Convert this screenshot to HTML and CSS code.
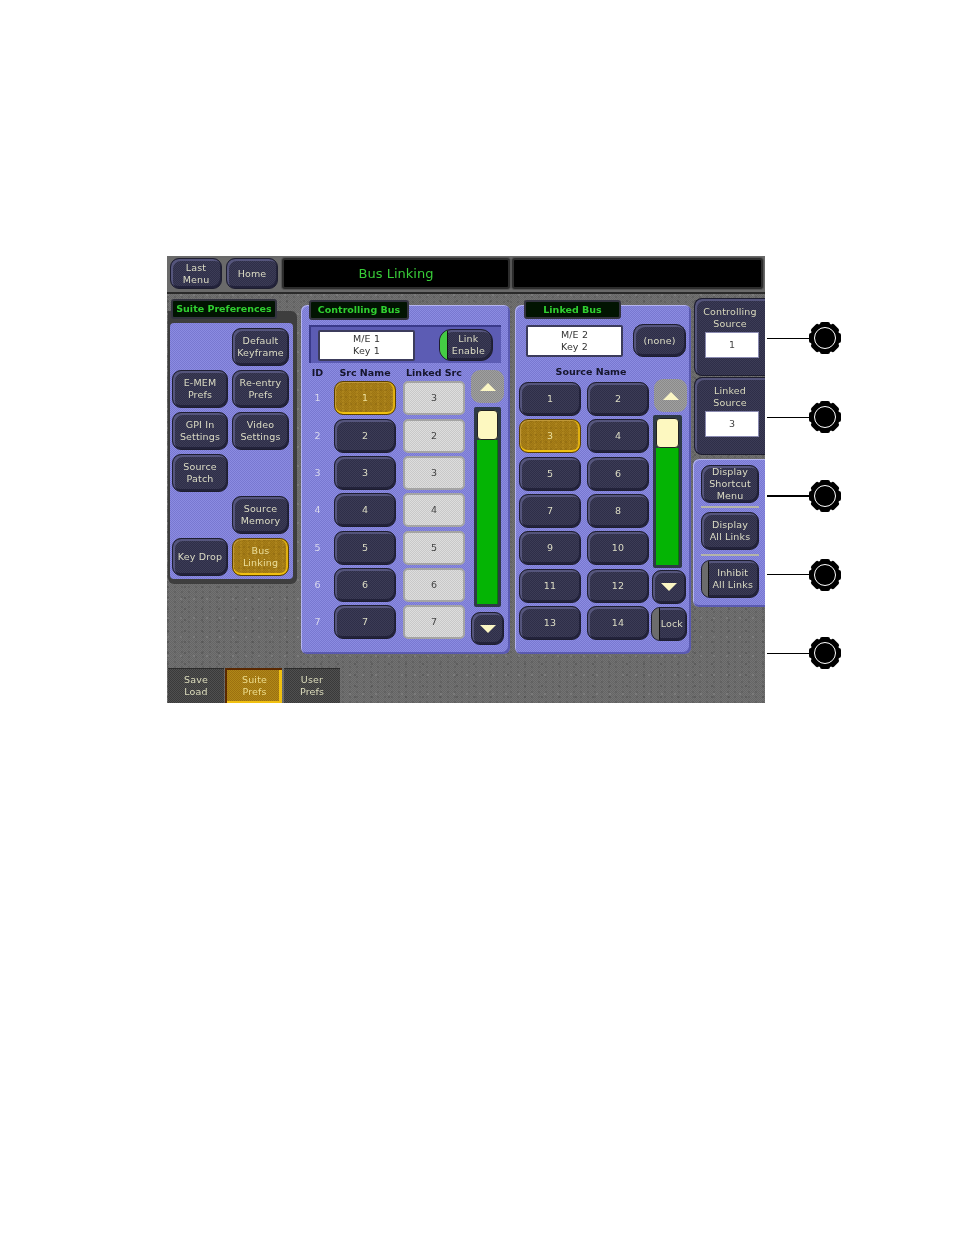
FILE: index.html
```html
<!DOCTYPE html>
<html lang="en">
<head>
<meta charset="utf-8">
<title>Bus Linking</title>
<link rel="stylesheet" href="styles.css">
</head>
<body>
<svg class="defs" width="0" height="0" aria-hidden="true">
  <symbol id="knob" viewBox="0 0 32 32">
    <g fill="#000">
      <circle cx="16" cy="16" r="14.8"/>
      <rect x="11" y="0" width="10" height="32" rx="2"/>
      <rect x="0" y="11" width="32" height="10" rx="2"/>
      <rect x="11" y="0" width="10" height="32" rx="2" transform="rotate(45 16 16)"/>
      <rect x="11" y="0" width="10" height="32" rx="2" transform="rotate(-45 16 16)"/>
    </g>
    <circle cx="16" cy="16" r="10.5" fill="#000" stroke="#fff" stroke-width="1"/>
  </symbol>
</svg>
<main class="sheet">
  <div class="console">
    <header class="topbar">
      <button class="btn top-btn">Last<br>Menu</button>
      <button class="btn top-btn">Home</button>
      <div class="title title-main">Bus Linking</div>
      <div class="title title-blank"></div>
    </header>
    <div class="workspace">
      <section class="prefs">
        <div class="tab tab-prefs">Suite Preferences</div>
        <div class="prefs-frame">
          <div class="prefs-grid">
            <span></span><button class="btn">Default<br>Keyframe</button>
            <button class="btn">E-MEM<br>Prefs</button><button class="btn">Re-entry<br>Prefs</button>
            <button class="btn">GPI In<br>Settings</button><button class="btn">Video<br>Settings</button>
            <button class="btn">Source<br>Patch</button><span></span>
            <span></span><button class="btn">Source<br>Memory</button>
            <button class="btn">Key Drop</button><button class="btn btn-on">Bus<br>Linking</button>
          </div>
        </div>
      </section>

      <section class="bus bus-ctrl">
        <div class="tab tab-ctrl">Controlling Bus</div>
        <div class="band">
          <div class="readout readout-ctrl">M/E 1<br>Key 1</div>
          <button class="btn btn-led"><i class="led"></i><span>Link<br>Enable</span></button>
        </div>
        <div class="bus-body">
          <div class="src-table">
            <div class="th">ID</div><div class="th">Src Name</div><div class="th th-linked">Linked Src</div>
            <div class="id">1</div><button class="btn btn-on">1</button><div class="linked">3</div>
            <div class="id">2</div><button class="btn">2</button><div class="linked">2</div>
            <div class="id">3</div><button class="btn">3</button><div class="linked">3</div>
            <div class="id">4</div><button class="btn">4</button><div class="linked">4</div>
            <div class="id">5</div><button class="btn">5</button><div class="linked">5</div>
            <div class="id">6</div><button class="btn">6</button><div class="linked">6</div>
            <div class="id">7</div><button class="btn">7</button><div class="linked">7</div>
          </div>
          <div class="scroller scroller-ctrl">
            <button class="arrow arrow-off"><i class="tri tri-up"></i></button>
            <div class="track track-ctrl"><div class="thumb"></div><div class="fill"></div></div>
            <button class="btn arrow"><i class="tri tri-down"></i></button>
          </div>
        </div>
      </section>

      <section class="bus bus-linked">
        <div class="tab tab-linked">Linked Bus</div>
        <div class="linked-head">
          <div class="readout readout-linked">M/E 2<br>Key 2</div>
          <button class="btn btn-none">(none)</button>
        </div>
        <div class="linked-body">
          <div class="names">
            <div class="th th-names">Source Name</div>
            <div class="name-grid">
              <button class="btn">1</button><button class="btn">2</button>
              <button class="btn btn-on">3</button><button class="btn">4</button>
              <button class="btn">5</button><button class="btn">6</button>
              <button class="btn">7</button><button class="btn">8</button>
              <button class="btn">9</button><button class="btn">10</button>
              <button class="btn">11</button><button class="btn">12</button>
              <button class="btn">13</button><button class="btn">14</button>
            </div>
          </div>
          <div class="scroller scroller-linked">
            <button class="arrow arrow-off"><i class="tri tri-up"></i></button>
            <div class="track track-linked"><div class="thumb"></div><div class="fill"></div></div>
            <button class="btn arrow arrow-down2"><i class="tri tri-down"></i></button>
            <button class="btn btn-lock"><i class="led led-off"></i><span>Lock</span></button>
          </div>
        </div>
      </section>

      <aside class="side">
        <div class="knob-panel">
          <div class="knob-label">Controlling<br>Source</div>
          <div class="knob-value">1</div>
        </div>
        <div class="knob-panel">
          <div class="knob-label">Linked<br>Source</div>
          <div class="knob-value">3</div>
        </div>
        <div class="side-menu">
          <button class="btn">Display<br>Shortcut<br>Menu</button>
          <hr class="rule">
          <button class="btn">Display<br>All Links</button>
          <hr class="rule">
          <button class="btn btn-led"><i class="led led-off"></i><span>Inhibit<br>All Links</span></button>
        </div>
      </aside>
    </div>
    <nav class="pages">
      <button class="page">Save<br>Load</button>
      <button class="page page-on">Suite<br>Prefs</button>
      <button class="page">User<br>Prefs</button>
    </nav>
  </div>
  <div class="knobs">
    <div class="knob-row"><i class="wire"></i><svg class="knob"><use href="#knob"/></svg></div>
    <div class="knob-row"><i class="wire"></i><svg class="knob"><use href="#knob"/></svg></div>
    <div class="knob-row"><i class="wire wire-bold"></i><svg class="knob"><use href="#knob"/></svg></div>
    <div class="knob-row"><i class="wire"></i><svg class="knob"><use href="#knob"/></svg></div>
    <div class="knob-row"><i class="wire"></i><svg class="knob"><use href="#knob"/></svg></div>
  </div>
</main>
</body>
</html>
```
FILE: styles.css
```css
* { box-sizing: border-box; }
html, body { margin: 0; background: #fff; }
body { width: 954px; height: 1235px; overflow: hidden; font-family: "DejaVu Sans", sans-serif; font-size: 9.5px; line-height: 12px; }
.defs { display: block; height: 0; }

.sheet { display: flex; padding: 256px 0 0 167px; }
.console {
  width: 598px; height: 447px; display: flex; flex-direction: column;
  filter: blur(0.25px);
  background-color: #6c6c6c;
  background-image:
    radial-gradient(circle at 1px 1px, #4c4c4c 0.6px, transparent 0.8px),
    radial-gradient(circle at 1px 1px, #8a8a8a 0.6px, transparent 0.8px),
    radial-gradient(circle at 1px 1px, #565656 0.6px, transparent 0.8px),
    repeating-conic-gradient(#656565 0 25%, #737373 0 50%);
  background-size: 17px 11px, 13px 19px, 7px 5px, 2px 2px;
}

/* dithered button */
.btn {
  display: flex; align-items: center; justify-content: center; text-align: center;
  margin: 0; padding: 0; font: inherit; letter-spacing: 0.15px; color: #dcdcc4;
  border: 1px solid #1e1e30; border-radius: 9px;
  background-color: #34344e;
  background-image: repeating-conic-gradient(#2e2e48 0 25%, #3c3c56 0 50%);
  background-size: 2px 2px;
  box-shadow: inset 2px 2px 0 #55557c, inset -1px -2px 0 #22223a;
}
.btn-on {
  color: #ecdf9c; border-color: #5a4000;
  background-color: #a37a16;
  background-image:
    radial-gradient(circle at 1px 1px, #8a6610 0.6px, transparent 0.8px),
    radial-gradient(circle at 1px 1px, #b88f24 0.6px, transparent 0.8px),
    repeating-conic-gradient(#9c7414 0 25%, #a88018 0 50%);
  background-size: 5px 7px, 7px 3px, 2px 2px;
  box-shadow: inset 0 -2px 0 #f0c010, inset -2px 0 0 #e0b010, inset 1px 1px 0 #c09838;
}

/* top bar */
.topbar {
  flex: none; height: 38px; display: flex; padding: 2px 2px 0 3px; gap: 4px;
  background: #6a6a6a; border-bottom: 2px solid #2a2a2a;
}
.top-btn { width: 52px; height: 31px; }
.title {
  height: 31px; background: #000; border: 2px solid #2c2c2c; border-radius: 3px;
  box-shadow: 0 0 0 1px #555; display: flex; align-items: center; justify-content: center;
  color: #38cc38; font-size: 13px;
}
.title-main { width: 228px; }
.title-blank { width: 251px; margin-left: -2px; }

/* tabs */
.tab {
  position: relative; z-index: 1; display: flex; align-items: center; justify-content: center;
  background: #021402; color: #30d030; font-weight: bold; font-size: 9.5px;
  border: 2px solid #33333f; border-radius: 3px; height: 20px; white-space: nowrap;
}

.workspace { flex: none; height: 373px; display: flex; }

/* left column */
.prefs { width: 129px; margin: 5px 0 0 1px; }
.tab-prefs { width: 106px; margin-left: 3px; }
.prefs-frame {
  height: 273px; margin-top: -8px; padding: 12px 4px 5px 2px; width: 129px;
  background: #3e3e3e; border-radius: 0 6px 6px 6px;
}
.prefs-grid {
  height: 256px; display: grid; grid-template-columns: 56px 57px; grid-auto-rows: 38px;
  gap: 4px; padding: 5px 4px 0 2px; border-radius: 4px;
}
.prefs-grid, .bus, .side-menu {
  background-color: #8282da;
  background-image: repeating-conic-gradient(#7878d0 0 25%, #8c8ce2 0 50%);
  background-size: 2px 2px;
}

/* bus panels */
.bus {
  height: 349px; margin-top: 11px; border-radius: 6px;
  box-shadow: inset 1px 1px 0 #b4b4f0, inset -2px -2px 0 #5a5ab0;
}
.bus-ctrl { width: 209px; margin-left: 4px; }
.bus-linked { width: 176px; margin-left: 5px; }
.tab-ctrl { width: 100px; margin: -5px 0 0 8px; }
.tab-linked { width: 97px; height: 19px; margin: -5px 0 0 9px; }

.band {
  display: flex; align-items: center; height: 38px; margin: 5px 9px 0 8px; padding: 0 8px 0 9px;
  background: #5c5cb4; border-top: 2px solid #3a3a8a; border-left: 2px solid #3a3a8a;
}
.readout {
  display: flex; align-items: center; justify-content: center; text-align: center;
  background: #fff; color: #333; border: 2px solid #3c3c5c; letter-spacing: 0.15px; border-radius: 2px;
}
.readout-ctrl { width: 97px; height: 31px; margin-left: -2px; }
.btn-led { position: relative; overflow: hidden; justify-content: flex-end; }
.band .btn-led { width: 54px; height: 32px; margin-left: auto; border-radius: 12px; padding-right: 7px; }
.led { position: absolute; left: 0; top: 0; bottom: 0; width: 8px; background: #44cc44; border-right: 1px solid #111; }
.led-off { background: #6c6c6c; }

.bus-body { display: flex; }
.src-table {
  width: 164px; padding-top: 3px; display: grid;
  grid-template-columns: 33px 62px 69px; grid-template-rows: 12px repeat(7, 34px);
  row-gap: 3.33px; align-items: center;
}
.th { text-align: center; color: #15152c; font-weight: bold; font-size: 9.5px; white-space: nowrap; padding-top: 1px; }
.th-linked { justify-self: end; width: 62px; }
.src-table .btn { height: 34px; }
.src-table > .btn { width: 62px; }
.id { text-align: center; color: #d8d8ee; }
.linked {
  justify-self: end; width: 62px; height: 34px; display: flex; align-items: center; justify-content: center;
  color: #444; border: 2px solid #a4a4a4; border-radius: 5px;
  background-color: #d4d4d4;
  background-image: repeating-conic-gradient(#c8c8c8 0 25%, #dedede 0 50%);
  background-size: 2px 2px;
}

.scroller { display: flex; flex-direction: column; }
.scroller-ctrl { margin-left: 6px; padding-top: 7px; width: 33px; }
.arrow { width: 33px; height: 33px; padding: 0; display: flex; align-items: center; justify-content: center; border-radius: 9px; }
.arrow-off {
  border: 0;
  background-color: #959595;
  background-image: repeating-conic-gradient(#8a8a8a 0 25%, #a0a0a0 0 50%);
  background-size: 2px 2px;
}
.tri { display: block; width: 0; height: 0; border-left: 8px solid transparent; border-right: 8px solid transparent; }
.tri-up { border-bottom: 8px solid #fbf6c4; }
.tri-down { border-top: 8px solid #fbf6c4; }
.track {
  width: 27px; margin: 4px 0 5px 3px; padding: 3px; display: flex; flex-direction: column;
  background: #2e3a46; border-radius: 2px;
}
.track-ctrl { height: 200px; }
.track-linked { height: 153px; margin: 3px 0 2px 1px; width: 29px; }
.thumb { flex: none; height: 30px; background: #fdf8c0; border: 1px solid #222; border-radius: 4px; }
.fill { flex: 1; background: #04b404; border-right: 1px solid #028002; }

/* linked panel */
.linked-head { display: flex; align-items: center; margin-top: 5px; padding: 0 0 0 11px; gap: 10px; height: 33px; }
.readout-linked { width: 97px; height: 32px; }
.btn-none { width: 53px; height: 33px; border-radius: 10px; }
.linked-body { display: flex; }
.names { width: 134px; padding: 8px 0 0 4px; }
.th-names { padding-left: 14px; height: 17px; }
.name-grid { display: grid; grid-template-columns: 62px 62px; grid-auto-rows: 34px; gap: 3.33px 6px; }
.scroller-linked { margin-left: 3px; padding-top: 22px; width: 36px; }
.scroller-linked .arrow-off { margin-left: 2px; }
.arrow-down2 { width: 34px; height: 34px; }
.btn-lock {
  position: relative; overflow: hidden; width: 36px; height: 34px; margin: 3px 0 0 -1px;
  justify-content: flex-end; padding-right: 3px;
}

/* side column */
.side { width: 72px; margin: 4px 0 0 2px; }
.knob-panel {
  height: 78px; margin: 0 0 1px 1px; padding-top: 7px; text-align: center; color: #d8d8bc; letter-spacing: 0.15px;
  border-radius: 8px 0 0 8px; border: 1px solid #1e1e30; border-right: 0;
  background-color: #34344e;
  background-image: repeating-conic-gradient(#2e2e48 0 25%, #3c3c56 0 50%);
  background-size: 2px 2px;
  box-shadow: inset 2px 2px 0 #55557c;
}
.knob-value {
  width: 54px; height: 26px; margin: 2px 0 0 10px; display: flex; align-items: center; justify-content: center;
  background: #fff; color: #444; border: 1px solid #8a8ab0;
}
.side-menu {
  height: 148px; margin-top: 4px; padding: 6px 0 0 8px; border-radius: 6px 0 0 6px;
  box-shadow: inset 1px 1px 0 #b4b4f0, inset 0 -2px 0 #5a5ab0;
}
.side-menu .btn { width: 58px; height: 38px; }
.side-menu .btn-led { justify-content: flex-end; padding-right: 5px; }
.side-menu .led { width: 7px; }
.rule { width: 58px; height: 2px; margin: 3px 0 4px; border: 0; background: #b4b4a8; }
.side-menu .rule + .btn + .rule { margin: 4px 0 4px; }

/* bottom tabs */
.pages { flex: none; height: 35px; margin-top: 1px; display: flex; gap: 1px; padding-left: 1px; }
.page {
  width: 56px; height: 35px; margin: 0; padding: 0; font: inherit; color: #dcdcbc; letter-spacing: 0.15px;
  border: 0; border-top: 1px solid #2c2c2c;
  background-color: #444;
  background-image: repeating-conic-gradient(#3a3a3a 0 25%, #505050 0 50%);
  background-size: 2px 2px;
}
.page-on {
  width: 57px; margin-right: 1px; color: #ecdc8c; padding-bottom: 2px;
  background-color: #a87c14;
  background-image: repeating-conic-gradient(#9c7010 0 25%, #b08818 0 50%);
  background-size: 2px 2px;
  border-top: 2px solid #5a2800; border-left: 2px solid #5a2800;
  box-shadow: inset -3px 0 0 #f0c010, inset 0 -2px 0 #f0c010;
}

/* knobs */
.knobs { padding-top: 43px; width: 189px; }
.knob-row { height: 78.75px; display: flex; align-items: center; padding-left: 2px; }
.wire { display: block; width: 43px; height: 1px; background: #000; }
.wire-bold { height: 2px; }
.knob { width: 32px; height: 32px; margin-left: -1px; }
```
